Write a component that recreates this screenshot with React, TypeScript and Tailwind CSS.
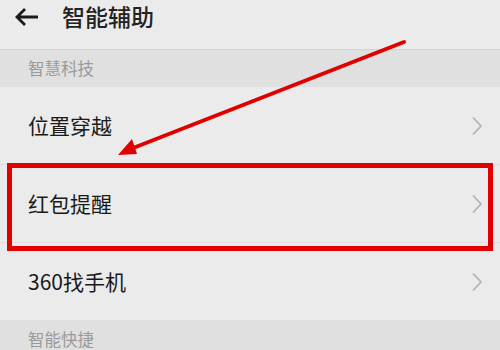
import React from "react";

const font = { fontFamily: '"Noto Sans CJK SC", "Noto Sans", sans-serif' };

function Chevron() {
  return (
    <svg width="12" height="20" viewBox="0 0 12 20" className="shrink-0">
      <path d="M2 1.5 L10 10 L2 18.5" fill="none" stroke="#b0b0b0" strokeWidth="1.6" />
    </svg>
  );
}

function Row({ label }: { label: string }) {
  return (
    <div className="h-[78px] flex items-center justify-between pl-[28px] pr-[17px] border-b border-[#dedede]">
      <span className="text-[21px] text-[#1a1a1a] leading-none">{label}</span>
      <Chevron />
    </div>
  );
}

function Section({ label }: { label: string }) {
  return (
    <div className="h-[37px] flex items-center pl-[28px] bg-[#e0e0e0]">
      <span className="text-[16.5px] text-[#9a9a9a] leading-none">{label}</span>
    </div>
  );
}

export default function App() {
  return (
    <div className="relative w-[500px] h-[350px] overflow-hidden bg-[#ebebeb]" style={font}>
      <div className="h-[50px] flex items-center border-b border-[#d4d4d4]">
        <svg width="24" height="20" viewBox="0 0 24 20" className="ml-[15px] mt-[-16px]">
          <path d="M23 10 H2.5 M10 2 L2 10 L10 18" fill="none" stroke="#1a1a1a" strokeWidth="2.8" />
        </svg>
        <span className="ml-[23px] mt-[-16px] text-[23px] font-medium text-[#222] leading-none">智能辅助</span>
      </div>
      <Section label="智慧科技" />
      <Row label="位置穿越" />
      <Row label="红包提醒" />
      <Row label="360找手机" />
      <Section label="智能快捷" />

      <div className="absolute left-[7px] top-[163px] w-[486px] h-[88px] border-[5px] border-[#e00000]" />
      <svg className="absolute left-0 top-0" width="500" height="350" viewBox="0 0 500 350">
        <line x1="404" y1="42" x2="128" y2="150" stroke="#e00000" strokeWidth="4" strokeLinecap="round" />
        <polygon points="118,155 132,139 137,154" fill="#e00000" />
      </svg>
    </div>
  );
}
